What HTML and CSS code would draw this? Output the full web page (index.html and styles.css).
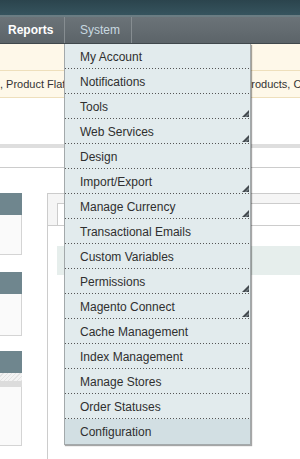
FILE: index.html
```html
<!DOCTYPE html>
<html lang="en">
<head>
    <meta charset="UTF-8">
    <title>System - Magento Admin</title>
    <link rel="stylesheet" href="styles.css">
</head>
<body>
    <svg class="defs" width="0" height="0">
        <symbol id="more" viewBox="0 0 7 7">
            <path d="M7 0V7H0Z" fill="#42494e"/>
            <path d="M3 7.5L7.5 3" stroke="#aab5b9" stroke-width="0.8"/>
        </symbol>
    </svg>
    <div class="header-top"></div>
    <nav class="nav">
        <ul class="nav-list">
            <li class="nav-item">Reports</li>
            <li class="nav-item active">System
                <ul class="dropdown">
                    <li>My Account</li>
                    <li>Notifications</li>
                    <li>Tools<svg class="more"><use href="#more"/></svg></li>
                    <li>Web Services<svg class="more"><use href="#more"/></svg></li>
                    <li>Design</li>
                    <li>Import/Export<svg class="more"><use href="#more"/></svg></li>
                    <li>Manage Currency<svg class="more"><use href="#more"/></svg></li>
                    <li>Transactional Emails</li>
                    <li>Custom Variables</li>
                    <li>Permissions<svg class="more"><use href="#more"/></svg></li>
                    <li>Magento Connect<svg class="more"><use href="#more"/></svg></li>
                    <li>Cache Management</li>
                    <li>Index Management</li>
                    <li>Manage Stores</li>
                    <li>Order Statuses</li>
                    <li class="last">Configuration</li>
                </ul>
            </li>
        </ul>
    </nav>
    <div class="notice"></div>
    <div class="notice">, Product Flat Data, Category Flat Data, Category Products, Catalog Search Index</div>
    <div class="page-band"></div>
    <div class="page-rule"></div>
    <div class="columns">
        <aside class="side">
            <div class="side-box">
                <div class="side-head"></div>
                <div class="side-body"></div>
            </div>
            <div class="side-box">
                <div class="side-head"></div>
                <div class="side-body tall"></div>
            </div>
            <div class="side-box">
                <div class="side-head"></div>
                <div class="side-stripe"></div>
                <div class="side-gray"></div>
                <div class="side-body last"></div>
            </div>
        </aside>
        <main class="main">
            <div class="main-head">
                <div class="main-tab"></div>
            </div>
            <div class="main-row"></div>
        </main>
    </div>
</body>
</html>
```

FILE: styles.css
```css
* {
    margin: 0;
    padding: 0;
    box-sizing: border-box;
}
body {
    font-family: 'Liberation Sans', Arial, sans-serif;
    font-size: 12px;
    color: #2f2f2f;
    background: #ffffff;
    overflow: hidden;
}
.defs { position: absolute; }
ul { list-style: none; }

/* header */
.header-top { height: 17px; background: linear-gradient(#2b444d, #36545e); border-bottom: 2px solid #6b7d83; }
.nav { height: 27px; background: linear-gradient(#6b7378, #5c6469); border-bottom: 1px solid #40484c; }
.nav-list { display: flex; height: 100%; }
.nav-item { position: relative; height: 26px; line-height: 27px; color: #ffffff; font-weight: bold; border-right: 1px solid #868d91; }
.nav-item:first-child { width: 65px; padding-left: 8px; }
.nav-item.active { width: 67px; padding-left: 15px; color: #c9d9e0; font-weight: normal; }

/* dropdown */
.dropdown { position: absolute; top: 27px; left: -1px; width: 187px; background: #e2ebed; border: 1px solid #a3a9ab; border-top: none; box-shadow: 1px 1px 1px rgba(0, 0, 0, 0.35); z-index: 10; font-weight: normal; color: #2f2f2f; line-height: 24px; }
.dropdown li { position: relative; height: 25px; padding: 1px 0 0 15px; background-image: linear-gradient(to right, #555 1px, transparent 1px); background-size: 3px 1px; background-repeat: repeat-x; background-position: left bottom; }
.dropdown li.last { background: #d2dfe3; }
.more { position: absolute; right: 1px; bottom: 2px; width: 7px; height: 7px; }

/* notices */
.notice { height: 27px; line-height: 26px; font-size: 11px; color: #333; white-space: nowrap; overflow: hidden; background: #fef8e9; border-bottom: 1px solid #eedfbc; }

/* page */
.page-band { height: 4px; margin-top: 46px; background: #dedede; }
.page-rule { height: 1px; margin-top: 19px; background: #cccccc; }
.columns { display: flex; gap: 25px; margin-top: 25px; }
.side { width: 22px; flex-shrink: 0; }
.side-box { margin-bottom: 17px; }
.side-head { height: 22px; background: #6f868e; }
.side-body { height: 40px; background: #fafafa; border: 1px solid #d4d4d4; border-top: none; border-left: none; }
.side-body.tall { height: 42px; }
.side-body.last { height: 59px; }
.side-box:nth-child(2) { margin-bottom: 15px; }
.side-stripe { height: 8px; background: repeating-linear-gradient(135deg, #f3f3f3 0 2px, #e3e3e3 2px 3px); }
.side-gray { height: 6px; background: #dcdcdc; }
.main { flex: 1; border-left: 1px solid #cccccc; min-height: 270px; }
.main-head { height: 33px; padding: 9px 0 0 9px; background: #f5f5f5; border-top: 1px solid #cccccc; border-bottom: 1px solid #cccccc; }
.main-tab { height: 100%; background: #ffffff; border-left: 1px solid #cccccc; border-top: 1px solid #cccccc; }
.main-row { height: 29px; margin: 20px 0 0 9px; background: #e6eeec; }
```
